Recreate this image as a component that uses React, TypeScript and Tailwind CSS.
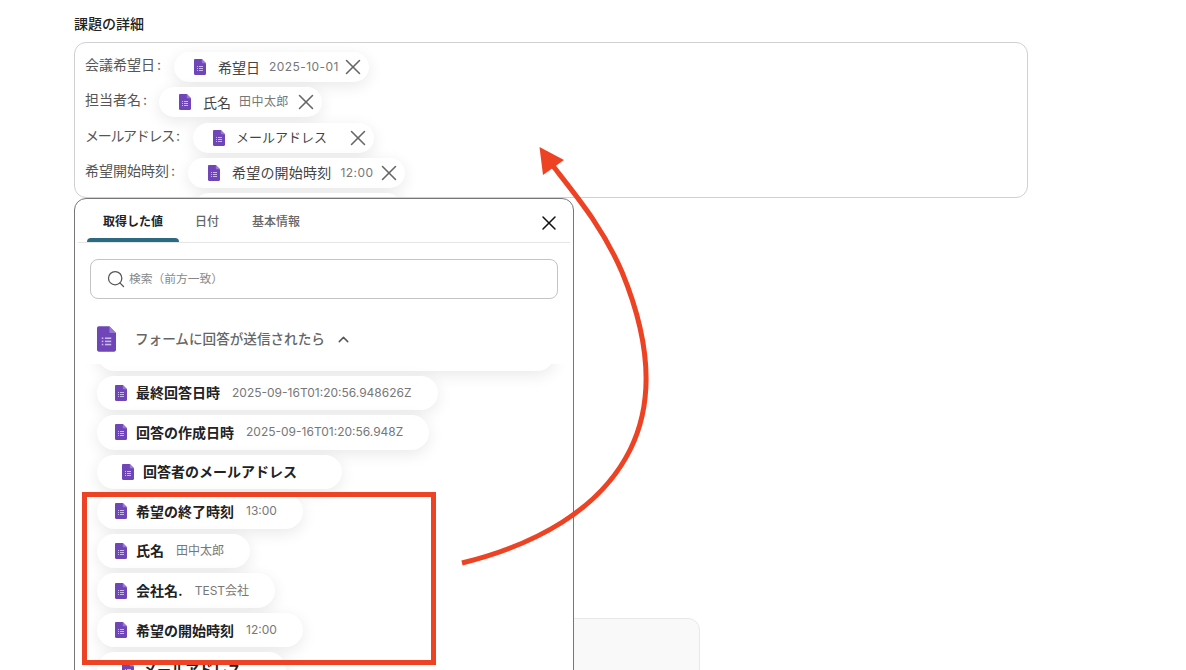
import { Search, X, ChevronUp } from "lucide-react";

function FormIcon({ className }: { className: string }) {
  return (
    <svg viewBox="0 0 12 16" className={className}>
      <path d="M1.2 0H7.8L12 4.2V14.8C12 15.5 11.5 16 10.8 16H1.2C.5 16 0 15.5 0 14.8V1.2C0 .5.5 0 1.2 0Z" fill="#6f45b8" />
      <path d="M7.8 0L12 4.2H8.6C8.1 4.2 7.8 3.9 7.8 3.4Z" fill="#9a78d6" />
      <g fill="#c9b8ea">
        <rect x="3" y="7" width="1" height="1" />
        <rect x="3" y="9" width="1" height="1" />
        <rect x="3" y="11" width="1" height="1" />
        <rect x="5" y="7" width="4" height="1" />
        <rect x="5" y="9" width="4" height="1" />
        <rect x="5" y="11" width="4" height="1" />
      </g>
    </svg>
  );
}

function FieldRow({
  label,
  labelClass,
  name,
  nameClass,
  value,
  iconGap,
  valueGap,
  closeGap,
}: {
  label: string;
  labelClass: string;
  name: string;
  nameClass: string;
  value?: string;
  iconGap: string;
  valueGap: string;
  closeGap: string;
}) {
  return (
    <div className="flex items-start h-[30px]">
      <span className={`text-[14px] leading-[26px] text-[#555] whitespace-nowrap ${labelClass}`}>
        {label}
        <span className="ml-[2px] tracking-normal">:</span>
      </span>
      <div className="h-[30px] flex items-center pl-[20px] pr-[3px] rounded-full bg-white shadow-[0_4px_16px_rgba(0,0,0,0.09)]">
        <FormIcon className="w-[12px] h-[16px] shrink-0" />
        <span className={`text-[#444] ${nameClass} ${iconGap}`}>{name}</span>
        {value && <span className={`text-[12px] text-[#777] tracking-[0.45px] ${valueGap}`}>{value}</span>}
        <X className={`w-[26px] h-[26px] shrink-0 text-[#666] ${closeGap}`} strokeWidth={1.4} />
      </div>
    </div>
  );
}

function ListChip({ name, value, plain }: { name: string; value?: string; plain?: boolean }) {
  return (
    <div
      className={`h-[34.5px] w-fit shrink-0 flex items-center rounded-full bg-white shadow-[0_4px_16px_rgba(0,0,0,0.09)] ${
        plain ? "pl-[25px] pr-[45px]" : "pl-[18px] pr-[26px]"
      }`}
    >
      <FormIcon className="w-[12px] h-[16px] shrink-0" />
      <span className="ml-[9px] text-[14px] font-bold text-[#222]">{name}</span>
      {value && <span className="ml-[12px] text-[12px] text-[#777]">{value}</span>}
    </div>
  );
}

export default function App() {
  return (
    <div className="relative w-full h-[670px] overflow-hidden bg-white font-['Inter','Noto_Sans_CJK_JP',sans-serif]">
      <div className="pl-[74px] pt-[14px]">
        <h2 className="text-[14px] leading-[20px] font-medium text-[#222]">課題の詳細</h2>
        <div className="mt-[8px] w-[954px] h-[156px] overflow-hidden rounded-[12px] border border-[#cfcfd6] pt-[9px] pl-[10px] flex flex-col gap-[5.25px]">
          <FieldRow label="会議希望日" labelClass="w-[89px]" name="希望日" nameClass="text-[14px]" value="2025-10-01" iconGap="ml-[12px]" valueGap="ml-[9px]" closeGap="ml-[1.5px]" />
          <FieldRow label="担当者名" labelClass="w-[74px]" name="氏名" nameClass="text-[14px]" value="田中太郎" iconGap="ml-[12px]" valueGap="ml-[8px]" closeGap="ml-[4px]" />
          <FieldRow label="メールアドレス" labelClass="w-[108px] tracking-[-1.3px]" name="メールアドレス" nameClass="text-[13px]" iconGap="ml-[11px]" valueGap="" closeGap="ml-[17.5px]" />
          <FieldRow label="希望開始時刻" labelClass="w-[103px]" name="希望の開始時刻" nameClass="text-[14px] tracking-[0.2px]" value="12:00" iconGap="ml-[12px]" valueGap="ml-[9px]" closeGap="ml-[2.5px]" />
          <div className="ml-[109px] h-[30px] w-[208px] shrink-0 rounded-full bg-white shadow-[0_4px_16px_rgba(0,0,0,0.09)]" />
        </div>
        <div className="mt-[420px] w-[626px] h-[120px] rounded-[12px] border border-[#e8e8e8] bg-[#f9f9f9]" />
      </div>

      <div className="absolute left-[74px] top-[198px] w-[500px] h-[490px] overflow-hidden rounded-t-[12px] border border-[#777] bg-white">
        <div className="relative mx-[3px] h-[44px] border-b border-[#e5e5e5] flex items-start pl-[9px]">
          <div className="relative w-[92px] h-[43px] pl-[16px] pt-[13px] text-[12px] leading-[20px] font-bold text-[#222]">
            取得した値
            <div className="absolute left-0 bottom-0 w-[92px] h-[4px] rounded-t-[4px] bg-[#2b6a80]" />
          </div>
          <div className="ml-[16px] pt-[13px] text-[12px] leading-[20px] font-medium text-[#666]">日付</div>
          <div className="ml-[33px] pt-[13px] text-[12px] leading-[20px] font-medium text-[#666]">基本情報</div>
          <X className="absolute right-[9px] top-[12px] w-[24px] h-[24px] text-[#111]" strokeWidth={1.5} />
        </div>
        <div className="mx-[15px] mt-[16px] h-[40px] w-[468px] rounded-[8px] border border-[#c4c4c4] flex items-center pl-[15px]">
          <Search className="w-[20px] h-[20px] text-[#555]" strokeWidth={1.5} />
          <span className="ml-[3px] mt-[2px] text-[11.75px] text-[#888]">検索（前方一致）</span>
        </div>
        <div className="relative z-10 mt-[15px] ml-[1px] w-[491px] h-[50px] bg-white rounded-br-[8px] flex items-center pl-[21px]">
          <FormIcon className="w-[19px] h-[26px] shrink-0" />
          <span className="ml-[19px] mt-[1px] text-[13.6px] font-medium text-[#666]">フォームに回答が送信されたら</span>
          <ChevronUp className="ml-[10px] mt-[1px] w-[17px] h-[17px] text-[#555]" strokeWidth={2} />
        </div>
        <div className="pl-[22px] flex flex-col gap-[5.05px]">
          <div className="-mt-[28px] h-[34.5px] w-[458px] shrink-0 rounded-[20px] bg-white shadow-[0_4px_16px_rgba(0,0,0,0.09)]" />
          <ListChip name="最終回答日時" value="2025-09-16T01:20:56.948626Z" />
          <ListChip name="回答の作成日時" value="2025-09-16T01:20:56.948Z" />
          <ListChip name="回答者のメールアドレス" plain />
          <ListChip name="希望の終了時刻" value="13:00" />
          <ListChip name="氏名" value="田中太郎" />
          <ListChip name="会社名." value="TEST会社" />
          <ListChip name="希望の開始時刻" value="12:00" />
          <ListChip name="メールアドレス" plain />
        </div>
      </div>

      <div className="absolute left-[82px] top-[492px] w-[354px] h-[173px] border-[5px] border-[#ee4224]" />

      <svg className="absolute left-0 top-0 w-[1186px] h-[670px] pointer-events-none" viewBox="0 0 1186 670" fill="none">
        <path
          d="M462 563C535 545 600 510 630 450C655 400 650 340 622 272C603 228 578 198 553 166"
          stroke="#ee4224"
          strokeWidth="5"
        />
        <path d="M539.5 147L564 160L543 175Z" fill="#ee4224" />
      </svg>
    </div>
  );
}
